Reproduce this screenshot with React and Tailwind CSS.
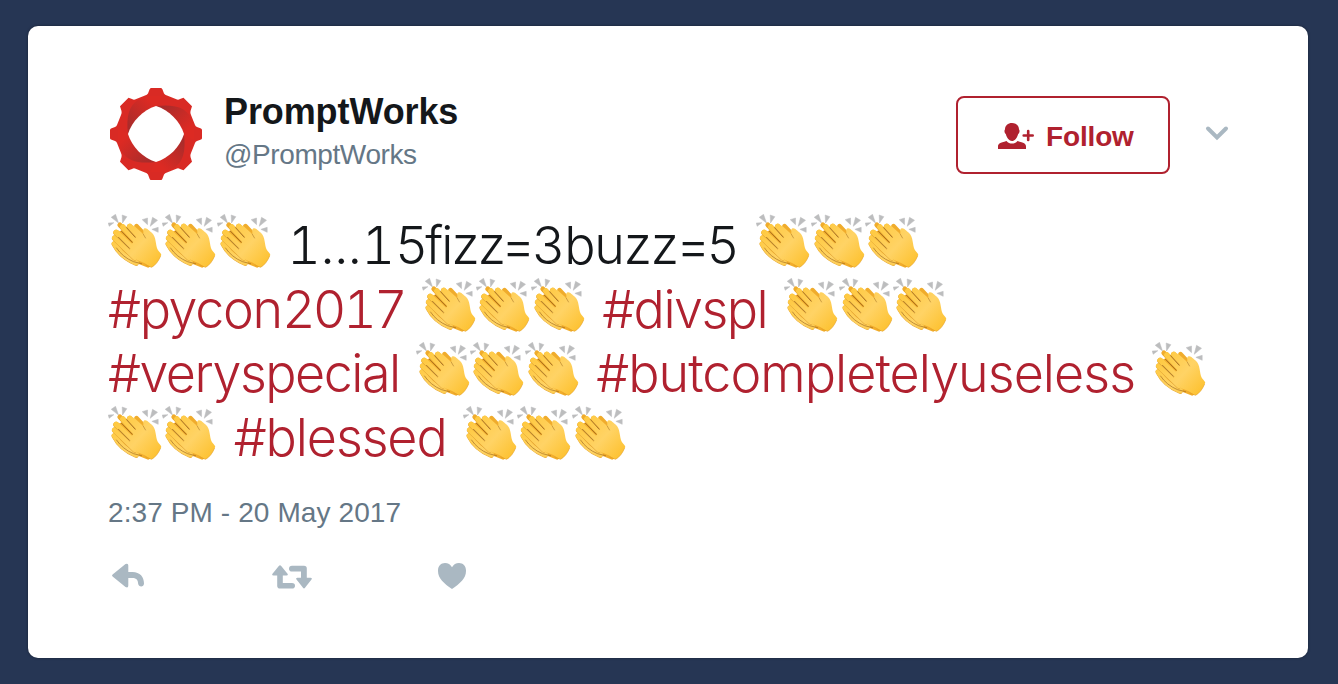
const FINGERS = [
  "M31 101C43 125 65 145 96 158",
  "M32 84 92 142",
  "M36 67 100 128",
  "M56 51 108 106",
  "M77 49 122 96",
];

const Clap = () => (
  <svg viewBox="12 12 162 162" className="h-[54px] w-[54.4px] shrink-0">
    <defs>
      <linearGradient id="skin" gradientUnits="userSpaceOnUse" x1="30" y1="50" x2="160" y2="165">
        <stop offset="0" stopColor="#ffc83c" />
        <stop offset=".55" stopColor="#ffd365" />
        <stop offset="1" stopColor="#fdc12f" />
      </linearGradient>
    </defs>
    <path fill="#bcbdbe" stroke="#bcbdbe" strokeWidth="1.500" d="M12 39 29 38 15 49ZM21 22 34 13 43 39ZM54 15 68 20 55 39ZM114 29 130 24 130 44ZM145 22 160 31 138 49ZM143 58 162 52V67Z" />
    <path fill="#f2ad2b" d="M30 108C42 132 68 152 98 160L132 173 142 168 130 125 84 56 60 56 42 66 30 84Z" />
    <g fill="none" strokeLinecap="round">
      <path stroke="#f0ac2c" strokeWidth="15" d="M47 45 60 58M97 49 118 72" />
      {FINGERS.map((d) => (
        <g key={d}>
          <path stroke="#dfa032" strokeWidth="17" d={d} transform="translate(-.3 1)" />
          <path stroke="url(#skin)" strokeWidth="16.500" d={d} />
        </g>
      ))}
    </g>
    <path fill="url(#skin)" d="M88 46 117 72C119 66 114 58 121 55C130 53 134 63 143 68C157 80 153 104 161 120C170 132 174 132 169 139C163 153 154 166 143 172C132 169 126 160 113 156C96 151 82 140 76 128L80 106 96 84Z" />
    <g fill="none" stroke="#96601c" strokeWidth="2.400" strokeLinecap="round">
      <path d="M67 53 93 82M52 64 84 97M43 82 76 115" />
      <path d="M37 114C49 132 66 146 88 155L112 161" opacity=".75" />
      <path d="M117 72 124 84" opacity=".6" />
      <path stroke="#e09a22" d="M125 165 142 172C154 166 163 153 169 139" opacity=".7" />
    </g>
  </svg>
);

const Claps = ({ count = 3 }) => (
  <span className="flex shrink-0">
    {Array.from({ length: count }, (_, i) => <Clap key={i} />)}
  </span>
);

const Logo = () => (
  <svg viewBox="0 0 96 96" className="size-24 shrink-0">
    <defs>
      <linearGradient id="blade" gradientUnits="userSpaceOnUse" x1="20" y1="40" x2="46" y2="14">
        <stop offset="0" stopColor="#a92c2b" />
        <stop offset=".9" stopColor="#dc2a23" />
      </linearGradient>
    </defs>
    <path fill="#d92a24" d="M43 2H53Q54 2 54.500 3.500L56 7.500Q57 9 59 9.500L69 13.500Q70.500 14 72 13L75.500 11.700 84 20.300 82.500 25Q82 27 83 29L87 39Q87.500 40.500 89 41L93 42.500Q94 43 94 44V52Q94 53 93 53.500L89 55Q87.500 55.500 87 57L83 67Q82 69 82.500 71L84 75.700 75.500 84.300 72 83Q70.500 82 69 82.500L59 86.500Q57 87 56 88.500L54.500 92.500Q54 94 53 94H43Q42 94 41.500 92.500L40 88.500Q39 87 37 86.500L27 82.500Q25.500 82 24 83L20.500 84.300 12 75.700 13.500 71Q14 69 13 67L9 57Q8.500 55.500 7 55L3 53.500Q2 53 2 52V44Q2 43 3 42.500L7 41Q8.500 40.500 9 39L13 29Q14 27 13.500 25L12 20.300 20.500 11.700 24 13Q25.500 14 27 13.500L37 9.500Q39 9 40 7.500L41.500 3.500Q42 2 43 2Z" />
    {[0, 90, 180, 270].map((angle) => (
      <path
        key={angle}
        fill="url(#blade)"
        transform={`rotate(${angle} 48 48)`}
        d="M20 48C18 30 21 20 30 14L42 10H54L48 20C36 24 25 35 20 48Z"
      />
    ))}
    <path fill="#fff" d="M48 20C61 24 72 35 76 48C72 61 61 72 48 76C35 72 24 61 20 48C24 35 35 24 48 20Z" />
  </svg>
);

const Tag = ({ className, children }) => (
  <a className={`shrink-0 whitespace-nowrap text-[#b0212f] ${className}`}>{children}</a>
);

export default function App() {
  return (
    <div className="h-[684px] w-[1338px] bg-[#263654] px-7 pt-[26px] font-['Liberation_Sans',sans-serif]">
      <article className="flex h-[632px] w-[1280px] flex-col rounded-[10px] bg-white px-20 pt-[60px] shadow-[0_0_3px_rgba(0,0,0,0.4)]">
        <header className="flex h-24">
          <Logo />
          <div className="ml-5 flex flex-col">
            <div className="mt-1.5 text-[36px] leading-[40px] font-bold tracking-[-0.1px] text-[#14171a]">PromptWorks</div>
            <div className="mt-[3px] text-[28px] leading-10 tracking-[-0.4px] text-[#657786]">@PromptWorks</div>
          </div>
          <button className="mt-2.5 ml-auto flex h-[78px] w-[214px] items-center rounded-lg border-2 border-[#b0212f] pl-10 text-[28px] font-bold text-[#b0212f]">
            <svg viewBox="0 0 36 26" className="mt-px h-[26px] w-9" fill="currentColor">
              <path d="M14 0c4 0 7 2.500 7 6.500 1 .5.500 4-.8 4.500-1 4-3.500 7-6.200 7s-5.200-3-6.200-7C6.500 10.500 6 7 7 6.500 7 2.500 10 0 14 0ZM0 26v-2.500C0 20.500 2 19.800 8.500 18c1.500 2 3.500 2.500 5.500 2.500s4-.5 5.500-2.500c6.500 1.800 8.500 2.500 8.500 5.500V26Z" />
              <path d="M30.200 8v9M25.700 12.500h9" stroke="currentColor" strokeWidth="2.600" strokeLinecap="round" />
            </svg>
            <span className="ml-3 pt-[3px] tracking-[-0.15px]">Follow</span>
          </button>
          <svg viewBox="0 0 24 16" className="mt-[39px] mr-[-1px] ml-[35px] h-4 w-6" fill="none" stroke="#aab8c2" strokeWidth="4" strokeLinecap="round">
            <path d="m3 3.500 9 9 9-9" />
          </svg>
        </header>
        <div className="mt-8 flex flex-col font-['Inter',sans-serif] text-[52px] leading-[64px] font-light text-[#14171a]">
          <p className="flex h-16">
            <Claps />
            <span className="ml-[16px] w-[469px] shrink-0 whitespace-nowrap">
              <span className="inline-block w-[138px] tracking-[-0.3px] tabular-nums">1...15</span>
              <span className="inline-block w-[76px] tracking-[-1.9px]">fizz</span>
              <span className="inline-block w-[31px] tracking-[-3px]">=</span>
              <span className="inline-block w-[32px]">3</span>
              <span className="inline-block w-[112px] tracking-[-1.2px]">buzz</span>
              <span className="inline-block w-[31px]">=</span>
              <span className="inline-block">5</span>
            </span>
            <Claps />
          </p>
          <p className="flex h-16">
            <Tag className="w-[314px]">
              <span className="inline-block w-[174px] tracking-[-1.3px]">#pycon</span>
              <span className="tracking-[-3px] tabular-nums">2017</span>
            </Tag>
            <Claps />
            <Tag className="ml-[17px] w-[182px] tracking-[-1.5px]">#divspl</Tag>
            <Claps />
          </p>
          <p className="flex h-16">
            <Tag className="w-[308px] tracking-[-1.5px]">#veryspecial</Tag>
            <Claps />
            <Tag className="ml-[17px] w-[556px] tracking-[-0.95px]">#butcompletelyuseless</Tag>
            <Claps count={1} />
          </p>
          <p className="flex h-16">
            <Claps count={2} />
            <Tag className="ml-[17px] w-[229px] tracking-[-1.1px]">#blessed</Tag>
            <Claps />
          </p>
        </div>
        <time className="mt-[23px] text-[28px] leading-10 tracking-[0.1px] text-[#657786]">2:37 PM - 20 May 2017</time>
        <footer className="mt-[28px] flex h-8 items-start text-[#aab8c2]">
          <svg viewBox="0 0 40 32" className="h-8 w-10" fill="currentColor">
            <path d="M4.600 13.400 17.500 3Q20.300 1.800 20.300 4.500V11H24.500C32 11 36 16 36 22.500c0 4-5.500 4-5.900 0-.2-4-2-5.500-6.100-5.500h-3.700v7.500q0 2.800-2.800 1.500L4.600 15.600q-1.200-1.100 0-2.200Z" />
          </svg>
          <svg viewBox="0 0 40 28" className="mt-0.5 ml-[124px] h-7 w-10" fill="currentColor">
            <path d="M7 2.800q1-1.200 2 0l6.500 8q1 1.700-1 1.700h-3.700V20H20q3 0 3 2.800T20 25.600H8q-2.800 0-2.800-2.800V12.500H1.500q-2 0-1-1.700ZM20 2.800h12q2.800 0 2.800 2.800v9.200h3.700q2 0 1 1.700L33 24.800q-1 1.200-2 0l-6.500-8.300q-1-1.700 1-1.700H29V8.500h-9q-3 0-3-2.800T20 2.800Z" />
          </svg>
          <svg viewBox="0 0 28 27" className="mt-0.5 ml-[126px] h-[26px] w-7" preserveAspectRatio="none" fill="currentColor">
            <path d="M14 27C6 21 0 16 0 8.200-.1 3 3 0 7 0c3 0 5.500 1.500 7 4.500C15.500 1.500 18 0 21 0c4 0 7.100 3 7 8.200C28 16 22 21 14 27Z" />
          </svg>
        </footer>
      </article>
    </div>
  );
}
